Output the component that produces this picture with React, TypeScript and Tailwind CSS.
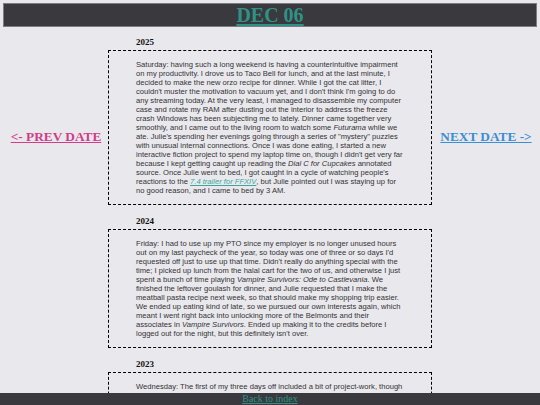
import React from "react";

const serif = { fontFamily: '"Liberation Serif", "Times New Roman", serif' };

function Entry({ year, children }: { year: string; children: React.ReactNode }) {
  return (
    <div className="flex flex-col">
      <div
        className="pl-[28px] text-[9px] leading-[10px] font-bold text-[#111]"
        style={serif}
      >
        {year}
      </div>
      <div className="mt-[3px] border border-dashed border-black px-[27px] pt-[9px] pb-[9px] text-[7.6px] leading-[9px] text-[#333] font-['Liberation_Sans',Arial,sans-serif]">
        {children}
      </div>
    </div>
  );
}

export default function App() {
  return (
    <div className="min-h-screen bg-[#e9e8ed] pt-[3px]">
      <div className="mx-[3px] h-[24px] border border-[#7d7c82] bg-[#3a393e] flex items-center justify-center">
        <a
          href="#"
          className="text-[20px] leading-[22px] font-bold text-[#2e9386] underline decoration-[2px] underline-offset-[2px]"
          style={serif}
        >
          DEC 06
        </a>
      </div>
      <div className="flex">
        <div className="w-[20%] flex justify-center pt-[102px] pl-[4px]">
          <a
            href="#"
            className="text-[13.3px] leading-[15px] font-bold text-[#d03d8a] underline h-fit"
            style={serif}
          >
            &lt;- PREV DATE
          </a>
        </div>
        <div className="w-[60%] flex flex-col gap-[11px] pt-[10px] pb-[40px]">
          <Entry year="2025">
            Saturday: having such a long weekend is having a counterintuitive impairment on my
            productivity. I drove us to Taco Bell for lunch, and at the last minute, I decided to
            make the new orzo recipe for dinner. While I got the cat litter, I couldn't muster the
            motivation to vacuum yet, and I don't think I'm going to do any streaming today. At the
            very least, I managed to disassemble my computer case and rotate my RAM after dusting
            out the interior to address the freeze crash Windows has been subjecting me to lately.
            Dinner came together very smoothly, and I came out to the living room to watch some{" "}
            <i>Futurama</i> while we ate. Julie's spending her evenings going through a series of
            "mystery" puzzles with unusual internal connections. Once I was done eating, I started a
            new interactive fiction project to spend my laptop time on, though I didn't get very far
            because I kept getting caught up reading the <i>Dial C for Cupcakes</i> annotated
            source. Once Julie went to bed, I got caught in a cycle of watching people's reactions
            to the{" "}
            <a href="#" className="text-[#3aa89b] underline italic">
              7.4 trailer for FFXIV
            </a>
            , but Julie pointed out I was staying up for no good reason, and I came to bed by 3 AM.
          </Entry>
          <Entry year="2024">
            Friday: I had to use up my PTO since my employer is no longer unused hours out on my last
            paycheck of the year, so today was one of three or so days I'd requested off just to use
            up that time. Didn't really do anything special with the time; I picked up lunch from the
            halal cart for the two of us, and otherwise I just spent a bunch of time playing{" "}
            <i>Vampire Survivors: Ode to Castlevania</i>. We finished the leftover goulash for
            dinner, and Julie requested that I make the meatball pasta recipe next week, so that
            should make my shopping trip easier. We ended up eating kind of late, so we pursued our
            own interests again, which meant I went right back into unlocking more of the Belmonts
            and their associates in <i>Vampire Survivors</i>. Ended up making it to the credits
            before I logged out for the night, but this definitely isn't over.
          </Entry>
          <Entry year="2023">
            Wednesday: The first of my three days off included a bit of project-work, though I mostly
            spent the afternoon catching up on chores around the apartment and getting the groceries
            put away before dinner.
          </Entry>
        </div>
        <div className="w-[20%] flex justify-center pt-[102px]">
          <a
            href="#"
            className="text-[13.3px] leading-[15px] font-bold text-[#3a8ed3] underline h-fit"
            style={serif}
          >
            NEXT DATE -&gt;
          </a>
        </div>
      </div>
      <div className="fixed bottom-0 left-0 right-0 h-[12px] bg-[#3a393e] flex items-center justify-center">
        <a href="#" className="text-[10px] leading-[12px] text-[#2e9386] underline" style={serif}>
          Back to index
        </a>
      </div>
    </div>
  );
}
